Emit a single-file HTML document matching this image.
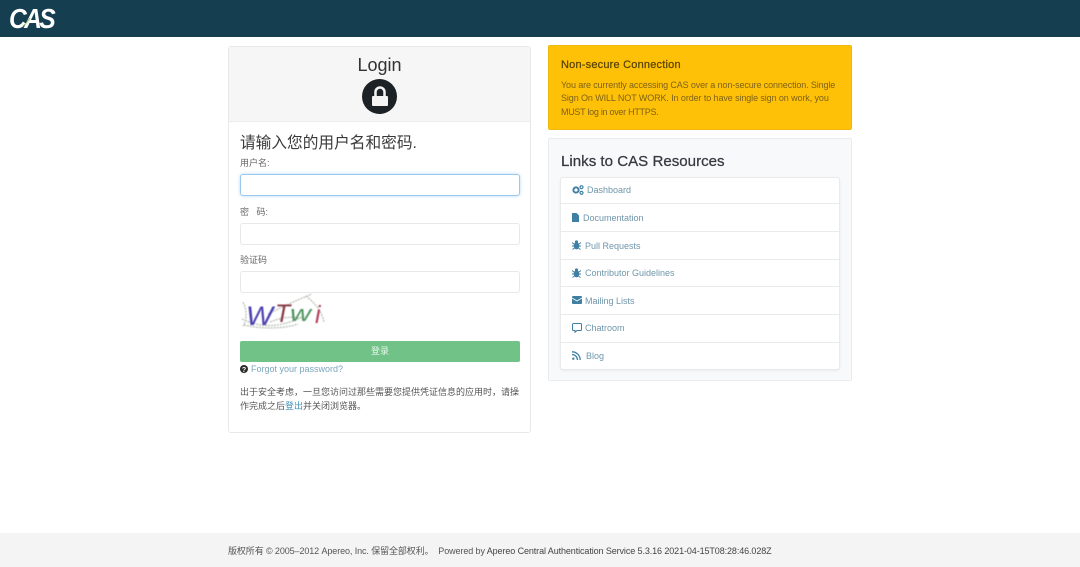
<!DOCTYPE html>
<html lang="zh">
<head>
<meta charset="utf-8">
<title>CAS Login</title>
<style>
html,body{margin:0;padding:0;background:#fff}
body{width:1080px;height:567px;overflow:hidden;position:relative;font-family:"Liberation Sans","Noto Sans CJK SC",sans-serif;color:#333}
div,a,span,svg{position:absolute;box-sizing:border-box;white-space:nowrap}
a{text-decoration:none}
.t{line-height:14px}
.inp{left:240px;width:280px;height:22px;background:#fff;border:1px solid #e6e8ea;border-radius:3px}
.lab{left:240px;font-size:9px;color:#666;line-height:12px}
.row a{position:absolute;left:0;font-size:9px;color:#6f96ab;line-height:14px}
.ln{left:561px;width:279px;height:1px;background:#e8eaec}
</style>
</head>
<body>
<div style="left:0;top:0;width:1080px;height:37px;background:#153e50"></div>
<div style="left:9px;top:4px;font:italic bold 28px/30px 'Liberation Sans',sans-serif;color:#fff;letter-spacing:-3px;transform:scaleX(.88);transform-origin:0 0">CAS</div>
<svg style="left:22px;top:17px" width="12" height="10" viewBox="0 0 12 10"><path d="M1 9C4 7 6 4 8 1" fill="none" stroke="#8fc06a" stroke-width="1"/></svg>

<div style="left:228px;top:46px;width:303px;height:387px;border:1px solid #e6e8ea;border-radius:3px;background:#fff"></div>
<div style="left:229px;top:47px;width:301px;height:75px;background:#f6f6f6;border-bottom:1px solid #ececec"></div>
<div style="left:229px;top:53px;width:301px;text-align:center;font-size:18px;line-height:24px;color:#333">Login</div>
<div style="left:362px;top:79px;width:35px;height:35px;border-radius:50%;background:#1d2226"></div>
<svg style="left:370px;top:85px" width="20" height="23" viewBox="0 0 20 23"><path d="M5.500 12V7a4.500 4.500 0 0 1 9 0v5" fill="none" stroke="#f4f4f4" stroke-width="2.500"/><rect x="2" y="11" width="16" height="10" rx="1" fill="#f4f4f4"/></svg>

<div style="left:240px;top:133px;font-size:15.7px;line-height:22px;color:#3a3a3a">请输入您的用户名和密码.</div>
<div class="lab" style="top:157px">用户名:</div>
<div class="inp" style="top:174px;border:1px solid #9cc8ec;box-shadow:0 0 3px #b5d8f4"></div>
<div class="lab" style="top:206px">密 &nbsp; 码:</div>
<div class="inp" style="top:223px"></div>
<div class="lab" style="top:254px">验证码</div>
<div class="inp" style="top:271px"></div>

<svg style="left:240px;top:292px;filter:blur(.5px)" width="86" height="42" viewBox="0 0 86 42">
<path d="M2 27C20 36 40 36 62 25M4 33C26 38 46 36 58 32M28 22C44 14 62 6 72 2M66 4C76 12 82 20 84 30M3 10C8 20 6 30 3 34M30 30C40 26 50 24 60 26" fill="none" stroke="#b4b9ae" stroke-width="1.200" stroke-dasharray="2 1"/>
<text x="6" y="33" font-family="Liberation Sans,sans-serif" font-style="italic" font-size="27" fill="#4a3fb0" textLength="27" lengthAdjust="spacingAndGlyphs">W</text>
<text x="35" y="30" font-family="Liberation Sans,sans-serif" font-style="italic" font-size="25" fill="#8a3a48">T</text>
<text x="50" y="29" font-family="Liberation Sans,sans-serif" font-style="italic" font-size="22" fill="#4f9560" textLength="21" lengthAdjust="spacingAndGlyphs">w</text>
<text x="75" y="31" font-family="Liberation Sans,sans-serif" font-style="italic" font-size="25" fill="#b2405a">i</text>
</svg>

<div style="left:240px;top:341px;width:280px;height:21px;background:#70c287;border-radius:2px;color:#e8f5ec;font-size:9px;line-height:21px;text-align:center">登录</div>
<svg style="left:240px;top:365px" width="8" height="8" viewBox="0 0 8 8"><circle cx="4" cy="4" r="4" fill="#2b2b2b"/><text x="4" y="6.800" font-size="7" font-weight="bold" text-anchor="middle" fill="#fff" font-family="Liberation Sans,sans-serif">?</text></svg>
<a class="t" style="left:251px;top:362px;font-size:9px;color:#7ba5bc">Forgot your password?</a>
<div class="t" style="left:240px;top:385px;font-size:9px;color:#555">出于安全考虑，一旦您访问过那些需要您提供凭证信息的应用时，请操</div>
<div class="t" style="left:240px;top:399px;font-size:9px;color:#555">作完成之后<span style="position:static;color:#3f8fb5">登出</span>并关闭浏览器。</div>

<div style="left:548px;top:45px;width:304px;height:85px;background:#ffc107;border:1px solid #f0b90f;border-radius:2px"></div>
<div style="left:561px;top:58px;font-size:11px;line-height:14px;color:#5a4503;letter-spacing:.2px;-webkit-text-stroke:.25px #5a4503">Non-secure Connection</div>
<div class="t" style="left:561px;top:78px;font-size:9px;color:#7d6218;letter-spacing:-.12px">You are currently accessing CAS over a non-secure connection. Single</div>
<div class="t" style="left:561px;top:91px;font-size:9px;color:#7d6218;letter-spacing:-.1px">Sign On WILL NOT WORK. In order to have single sign on work, you</div>
<div class="t" style="left:561px;top:105px;font-size:9px;color:#7d6218;letter-spacing:-.28px">MUST log in over HTTPS.</div>

<div style="left:548px;top:138px;width:304px;height:243px;background:#f8f9fa;border:1px solid #e9ebed;border-radius:2px"></div>
<div style="left:561px;top:151px;font-size:15.1px;line-height:22px;color:#343a40;-webkit-text-stroke:.25px #343a40">Links to CAS Resources</div>

<div style="left:560px;top:177px;width:280px;height:193px;background:#fff;border:1px solid #e8eaec;border-radius:3px;box-shadow:0 1px 2px #e9ecee"></div>
<div class="ln" style="top:203px"></div>
<div class="ln" style="top:231px"></div>
<div class="ln" style="top:259px"></div>
<div class="ln" style="top:286px"></div>
<div class="ln" style="top:314px"></div>
<div class="ln" style="top:342px"></div>

<div class="row" style="left:0;top:0">
<svg style="left:572px;top:185px" width="12" height="10" viewBox="0 0 12 10"><circle cx="4" cy="5" r="2.600" fill="none" stroke="#3f7fa3" stroke-width="2"/><circle cx="9.500" cy="2.200" r="1.500" fill="none" stroke="#3f7fa3" stroke-width="1.200"/><circle cx="9.500" cy="7.800" r="1.500" fill="none" stroke="#3f7fa3" stroke-width="1.200"/></svg>
<a style="left:587px;top:183px">Dashboard</a>
<svg style="left:572px;top:213px" width="7" height="9" viewBox="0 0 7 9"><path d="M0 0h4.500L7 2.500V9H0z" fill="#3f7fa3"/></svg>
<a style="left:583px;top:211px">Documentation</a>
<svg style="left:572px;top:240px" width="9" height="10" viewBox="0 0 9 10"><ellipse cx="4.500" cy="5.800" rx="2.800" ry="3.600" fill="#3f7fa3"/><circle cx="4.500" cy="2" r="1.600" fill="#3f7fa3"/><path d="M0 2.500l2 1.500M9 2.500L7 4M0 6h2M9 6H7M.5 9.500l2-1.500M8.500 9.500l-2-1.500" stroke="#3f7fa3" stroke-width="1"/></svg>
<a style="left:585px;top:239px">Pull Requests</a>
<svg style="left:572px;top:268px" width="9" height="10" viewBox="0 0 9 10"><ellipse cx="4.500" cy="5.800" rx="2.800" ry="3.600" fill="#3f7fa3"/><circle cx="4.500" cy="2" r="1.600" fill="#3f7fa3"/><path d="M0 2.500l2 1.500M9 2.500L7 4M0 6h2M9 6H7M.5 9.500l2-1.500M8.500 9.500l-2-1.500" stroke="#3f7fa3" stroke-width="1"/></svg>
<a style="left:585px;top:266px">Contributor Guidelines</a>
<svg style="left:572px;top:296px" width="10" height="8" viewBox="0 0 10 8"><rect width="10" height="8" rx="1" fill="#3f7fa3"/><path d="M0 2l5 3 5-3" fill="none" stroke="#fff" stroke-width=".8"/></svg>
<a style="left:585px;top:294px">Mailing Lists</a>
<svg style="left:572px;top:323px" width="10" height="10" viewBox="0 0 10 10"><path d="M1.500.5h7a1 1 0 0 1 1 1v5a1 1 0 0 1-1 1H5L3 9.300V7.500H1.500a1 1 0 0 1-1-1v-5a1 1 0 0 1 1-1z" fill="none" stroke="#3f7fa3"/></svg>
<a style="left:585px;top:321px">Chatroom</a>
<svg style="left:572px;top:351px" width="9" height="9" viewBox="0 0 9 9"><circle cx="1.300" cy="7.700" r="1.200" fill="#3f7fa3"/><path d="M0 3.500A5.500 5.500 0 0 1 5.500 9M0 .8A8.200 8.200 0 0 1 8.200 9" fill="none" stroke="#3f7fa3" stroke-width="1.300"/></svg>
<a style="left:586px;top:349px">Blog</a>
</div>

<div style="left:0;top:533px;width:1080px;height:34px;background:#f4f4f4"></div>
<div class="t" style="left:228px;top:544px;font-size:9px;color:#555;letter-spacing:-.1px">版权所有 © 2005–2012 Apereo, Inc. 保留全部权利。 &nbsp;Powered by <span style="position:static;color:#444">Apereo Central Authentication Service 5.3.16 2021-04-15T08:28:46.028Z</span></div>
</body>
</html>
